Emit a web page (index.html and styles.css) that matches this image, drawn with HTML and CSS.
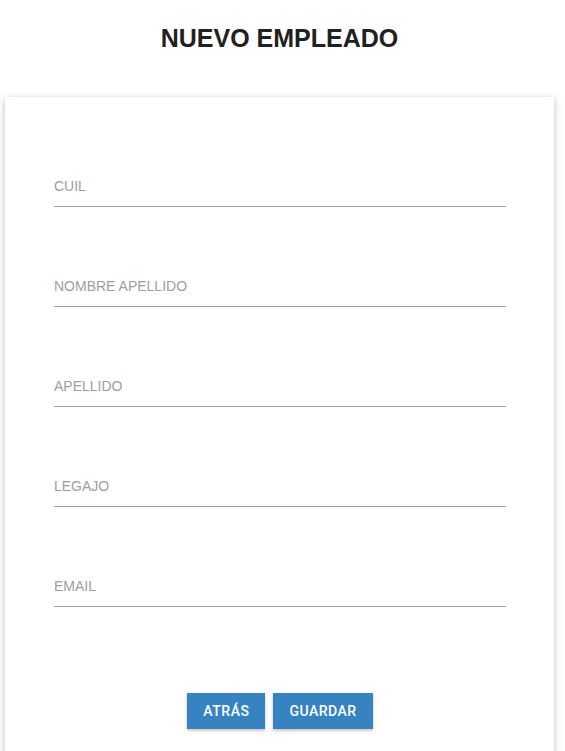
FILE: index.html
```html
<!DOCTYPE html>
<html lang="es">
<head>
<meta charset="utf-8">
<title>Nuevo empleado</title>
<link rel="stylesheet" href="styles.css">
</head>
<body>
<div class="page">
  <h1 class="title">NUEVO EMPLEADO</h1>
  <form class="card">
    <div class="field"><label class="label">CUIL</label></div>
    <div class="field"><label class="label">NOMBRE APELLIDO</label></div>
    <div class="field"><label class="label">APELLIDO</label></div>
    <div class="field"><label class="label">LEGAJO</label></div>
    <div class="field"><label class="label">EMAIL</label></div>
    <div class="actions">
      <button type="button" class="btn">ATRÁS</button>
      <button type="button" class="btn">GUARDAR</button>
    </div>
  </form>
</div>
</body>
</html>
```
FILE: styles.css
```css
html, body {
  margin: 0;
  padding: 0;
  background: #ffffff;
  font-family: "Liberation Sans", Arial, sans-serif;
}
.page {
  padding: 0 11px 0 5px;
}
.title {
  margin: 0;
  padding-top: 24px;
  height: 97px;
  box-sizing: border-box;
  font-size: 25px;
  line-height: 28px;
  font-weight: bold;
  text-align: center;
  color: #212121;
}
.card {
  background: #fff;
  box-shadow: 0 2px 5px rgba(0,0,0,0.16), 0 2px 10px rgba(0,0,0,0.12);
  padding: 10px 48px 60px 49px;
  min-height: 700px;
  box-sizing: border-box;
}
.field {
  padding-top: 69px;
  padding-bottom: 10px;
  border-bottom: 1px solid #9e9e9e;
}
.label {
  display: block;
  font-size: 14px;
  line-height: 20px;
  color: #9e9e9e;
}
.actions {
  display: flex;
  justify-content: center;
  gap: 8px;
  margin-top: 86px;
}
.btn {
  height: 36px;
  padding: 0 16px;
  border: none;
  border-radius: 0;
  background: #3783c2;
  color: #fff;
  font-family: Roboto, "Liberation Sans", sans-serif;
  font-weight: 500;
  font-size: 14px;
  letter-spacing: 0.5px;
  box-shadow: 0 2px 2px rgba(0,0,0,0.14), 0 1px 5px rgba(0,0,0,0.12);
  cursor: pointer;
}
```
